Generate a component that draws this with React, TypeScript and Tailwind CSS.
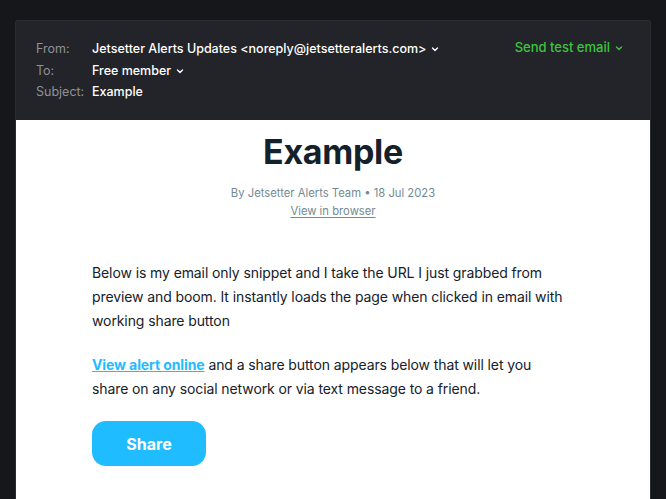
import React from "react";

function Chevron({ className = "" }: { className?: string }) {
  return (
    <svg viewBox="0 0 10 10" className={className} fill="none" stroke="currentColor" strokeWidth={1.4} strokeLinecap="round" strokeLinejoin="round">
      <path d="M2.5 4 L5 6.5 L7.5 4" />
    </svg>
  );
}

export default function App() {
  return (
    <div className="h-[499px] w-[666px] overflow-hidden bg-[#15171a] pt-[20px] px-[15px] font-['Inter',sans-serif]">
      <div className="rounded-t-[3px] bg-[#222429] border border-[#2a2c31] border-b-0 h-full flex flex-col">
        {/* header */}
        <div className="flex justify-between pl-[20px] pr-[26px] pt-[19px] pb-[16px] h-[99px] shrink-0">
          <div className="flex flex-col gap-[4px] text-[12.5px] leading-[17.5px]">
            <div className="flex">
              <span className="w-[56px] text-[#8e9198]">From:</span>
              <span className="text-white font-medium flex items-center gap-[4px]">
                Jetsetter Alerts Updates &lt;noreply@jetsetteralerts.com&gt;
                <Chevron className="w-[10px] h-[10px] mt-[1px]" />
              </span>
            </div>
            <div className="flex">
              <span className="w-[56px] text-[#8e9198]">To:</span>
              <span className="text-white font-medium flex items-center gap-[4px]">
                Free member
                <Chevron className="w-[10px] h-[10px] mt-[1px]" />
              </span>
            </div>
            <div className="flex">
              <span className="w-[56px] text-[#8e9198]">Subject:</span>
              <span className="text-white font-medium">Example</span>
            </div>
          </div>
          <div className="text-[13px] leading-[17.5px] text-[#3dc53d] font-medium flex items-start gap-[4px] -mt-[1px]">
            <span>Send test email</span>
            <Chevron className="w-[10px] h-[10px] mt-[4px]" />
          </div>
        </div>

        {/* body */}
        <div className="flex-1 bg-white">
          <div className="w-[482px] mx-auto pt-[11px]">
            <h1 className="text-center text-[34px] leading-[42px] font-bold text-[#15212a] tracking-[-0.3px]">Example</h1>
            <p className="text-center text-[11.25px] leading-[16px] text-[#738a94] mt-[12px]">By Jetsetter Alerts Team • 18 Jul 2023</p>
            <p className="text-center text-[11.25px] leading-[16px] text-[#738a94] mt-[2px]">
              <span className="underline underline-offset-2">View in browser</span>
            </p>

            <p className="w-[472px] text-[14px] tracking-[-0.1px] leading-[24px] text-[#15212a] mt-[42px]">
              Below is my email only snippet and I take the URL I just grabbed from preview and boom. It instantly loads the page when clicked in email with working share button
            </p>
            <p className="w-[472px] text-[14px] tracking-[-0.1px] leading-[24px] text-[#15212a] mt-[20px]">
              <a className="text-[#1fbcff] font-bold underline">View alert online</a> and a share button appears below that will let you share on any social network or via text message to a friend.
            </p>
            <button className="mt-[20px] w-[114px] h-[45px] rounded-[14px] bg-[#1fbcff] text-white font-bold text-[16px]">
              Share
            </button>
          </div>
        </div>
      </div>
    </div>
  );
}
